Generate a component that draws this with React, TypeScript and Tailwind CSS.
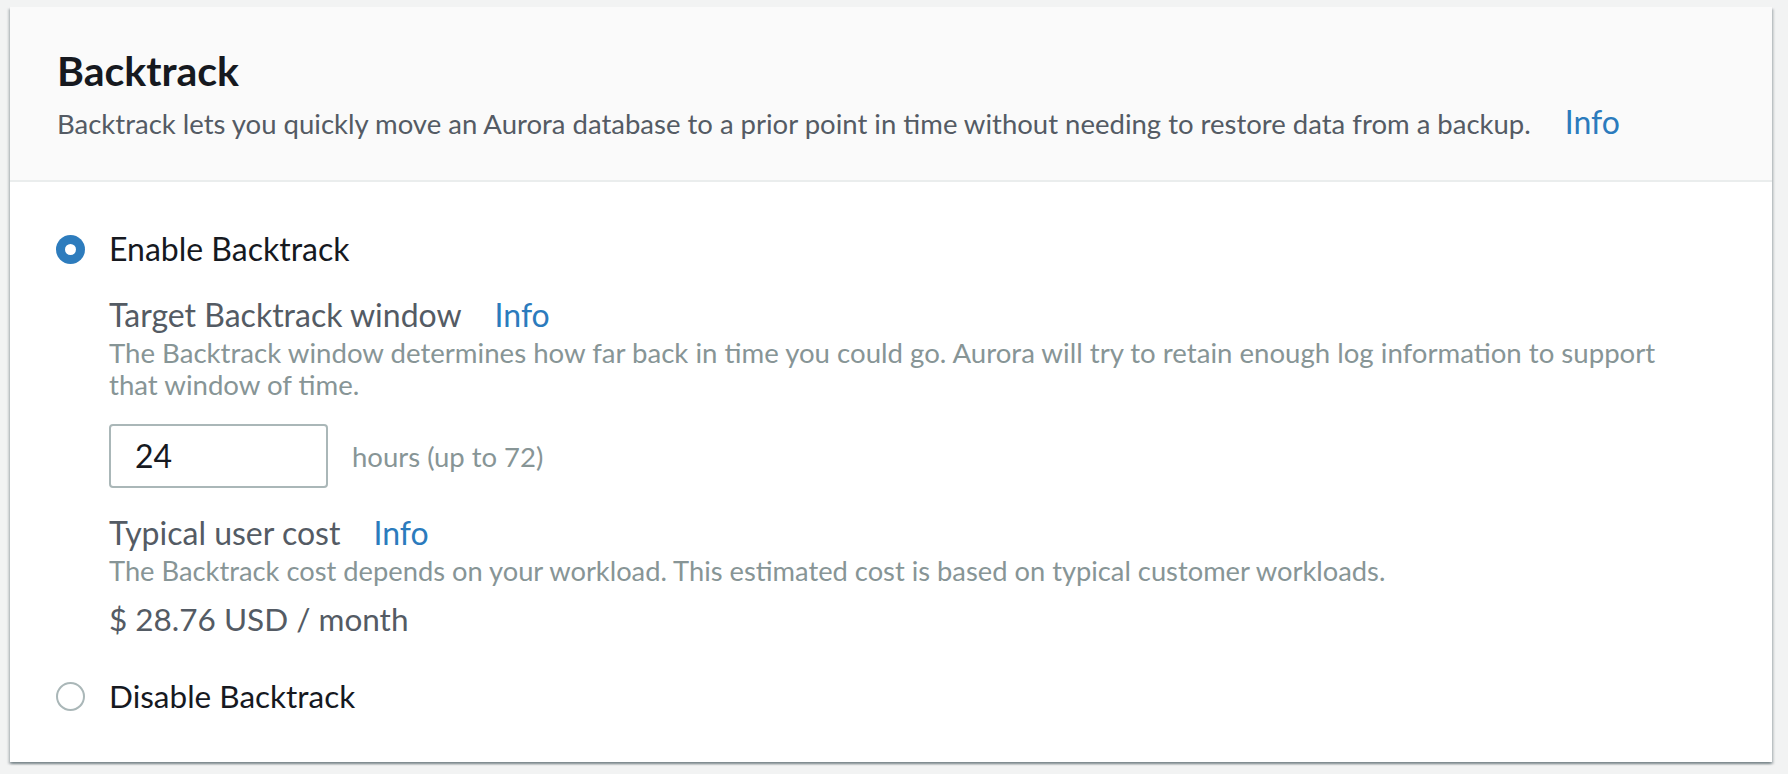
import React from 'react';

const font = { fontFamily: 'Lato, "Liberation Sans", sans-serif' };

const InfoLink: React.FC<{ className?: string }> = ({ className = '' }) => (
  <a className={`text-[#2b7bbd] text-[32px] leading-[36px] cursor-pointer ${className}`}>Info</a>
);

const Radio: React.FC<{ checked?: boolean }> = ({ checked = false }) =>
  checked ? (
    <span className="w-[29px] h-[29px] rounded-full bg-[#2d7cbd] flex items-center justify-center shrink-0">
      <span className="w-[11px] h-[11px] rounded-full bg-white" />
    </span>
  ) : (
    <span className="w-[29px] h-[29px] rounded-full border-2 border-[#aab7b8] bg-white shrink-0" />
  );

export default function App() {
  return (
    <div className="min-h-screen bg-[#f2f3f3] pt-[7px] pl-[10px] pr-[16px] pb-[11px]" style={font}>
      <div className="bg-white shadow-[0_2px_2px_0_rgba(0,28,36,0.3),2px_2px_2px_0_rgba(0,28,36,0.15),-2px_2px_2px_0_rgba(0,28,36,0.15)]">
        {/* Header */}
        <div className="bg-[#fafafa] border-b-2 border-[#eaeded] pt-[40px] pb-[38px] pl-[47px]">
          <h2 className="text-[41px] leading-[48px] font-bold text-[#16191f]">Backtrack</h2>
          <p className="mt-[9px] text-[27.5px] leading-[36px] text-[#545b64]">
            Backtrack lets you quickly move an Aurora database to a prior point in time without needing to restore
            data from a backup.
            <InfoLink className="ml-[34px]" />
          </p>
        </div>

        {/* Body */}
        <div className="pt-[49px] pb-[48px] pl-[46px] pr-[47px]">
          <label className="flex items-center gap-[24px]">
            <Radio checked />
            <span className="text-[32px] leading-[36px] text-[#16191f]">Enable Backtrack</span>
          </label>

          <div className="pl-[53px]">
            <div className="mt-[30px] flex items-center">
              <span className="text-[32px] leading-[36px] text-[#545b64]">Target Backtrack window</span>
              <InfoLink className="ml-[33px]" />
            </div>
            <p className="mt-[4px] max-w-[1570px] text-[27.6px] leading-[32px] text-[#879596]">
              The Backtrack window determines how far back in time you could go. Aurora will try to retain enough log
              information to support that window of time.
            </p>

            <div className="mt-[23px] flex items-center gap-[24px]">
              <div className="w-[219px] h-[64px] border-2 border-[#aab7b8] rounded-[4px] bg-white flex items-center pl-[24px]">
                <span className="text-[32px] leading-[36px] text-[#16191f]">24</span>
              </div>
              <span className="text-[27.5px] leading-[32px] text-[#879596] mt-[2px]">hours (up to 72)</span>
            </div>

            <div className="mt-[27px] flex items-center">
              <span className="text-[32px] leading-[36px] text-[#545b64]">Typical user cost</span>
              <InfoLink className="ml-[33px]" />
            </div>
            <p className="mt-[4px] text-[27.3px] leading-[32px] text-[#879596]">
              The Backtrack cost depends on your workload. This estimated cost is based on typical customer workloads.
            </p>
            <p className="mt-[14px] text-[31.5px] leading-[36px] text-[#545b64]">$ 28.76 USD / month</p>
          </div>

          <label className="mt-[41px] flex items-center gap-[24px]">
            <Radio />
            <span className="text-[31.5px] leading-[36px] text-[#16191f]">Disable Backtrack</span>
          </label>
        </div>
      </div>
    </div>
  );
}
